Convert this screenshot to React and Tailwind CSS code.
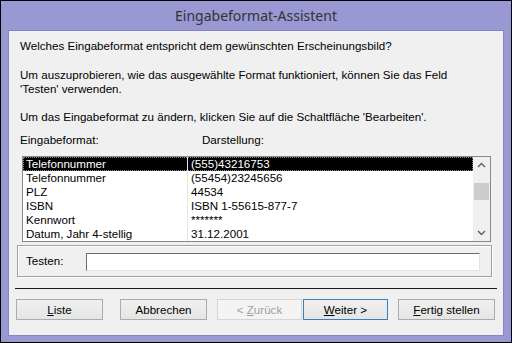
import React from "react";

const rows = [
  ["Telefonnummer", "(555)43216753"],
  ["Telefonnummer", "(55454)23245656"],
  ["PLZ", "44534"],
  ["ISBN", "ISBN 1-55615-877-7"],
  ["Kennwort", "*******"],
  ["Datum, Jahr 4-stellig", "31.12.2001"],
];

function Btn({ children, className = "", disabled, focused }) {
  return (
    <div
      className={
        "h-[21px] flex items-center justify-center border bg-gradient-to-b from-[#f0f0f0] to-[#e5e5e5] " +
        (focused ? "border-[#3c7fb1] " : disabled ? "border-[#d5d5d5] from-[#f4f4f4] to-[#f4f4f4] text-[#a0a0a0] " : "border-[#acacac] ") +
        className
      }
    >
      {children}
    </div>
  );
}

export default function App() {
  return (
    <div className="w-[512px] h-[343px] border border-black bg-[#9898d2] flex flex-col font-['Liberation_Sans',Arial,sans-serif] text-[11.6px] leading-[14px] text-black">
      <div className="h-[29px] flex items-center justify-center font-['Noto_Sans',sans-serif] text-[14px] text-[#333]">
        Eingabeformat-Assistent
      </div>
      <div className="mx-[7px] mb-[6px] flex-1 border border-[#8585c4] bg-[#f0f0f0] flex flex-col px-[7px]">
        <p className="pl-[4px] mt-[8px]">Welches Eingabeformat entspricht dem gewünschten Erscheinungsbild?</p>
        <p className="pl-[4px] mt-[15px]">
          Um auszuprobieren, wie das ausgewählte Format funktioniert, können Sie das Feld
          <br />
          'Testen' verwenden.
        </p>
        <p className="pl-[4px] mt-[14px]">Um das Eingabeformat zu ändern, klicken Sie auf die Schaltfläche 'Bearbeiten'.</p>
        <div className="pl-[4px] mt-[9px] flex">
          <span className="w-[182px]">Eingabeformat:</span>
          <span>Darstellung:</span>
        </div>
        <div className="ml-[6px] mt-[9px] w-[469px] h-[86px] border border-[#828790] bg-white flex overflow-hidden">
          <div className="flex-1 flex flex-col">
            {rows.map(([a, b], i) => (
              <div
                key={i}
                className={
                  "h-[14px] shrink-0 flex " +
                  (i === 0 ? "bg-black text-white outline outline-1 outline-dotted outline-[#888] -outline-offset-1" : "")
                }
              >
                <span className="w-[165px] pl-[3px] border-r border-[#e6e6e6]">{a}</span>
                <span className="pl-[3px]">{b}</span>
              </div>
            ))}
          </div>
          <div className="w-[17px] bg-[#f0f0f0] flex flex-col items-center">
            <svg width="17" height="17" viewBox="0 0 17 17" className="shrink-0">
              <path d="M5 10 L8.5 6.5 L12 10" fill="none" stroke="#606060" strokeWidth="1.4" />
            </svg>
            <div className="w-[15px] h-[17px] mt-[9px] bg-[#cdcdcd]" />
            <div className="flex-1" />
            <svg width="17" height="17" viewBox="0 0 17 17" className="shrink-0">
              <path d="M5 7 L8.5 10.5 L12 7" fill="none" stroke="#606060" strokeWidth="1.4" />
            </svg>
          </div>
        </div>
        <div className="ml-[1px] mt-[3px] w-[475px] h-[32px] border border-[#a0a0a0] shadow-[inset_1px_1px_0_#fff,1px_1px_0_#fff] flex items-center">
          <span className="ml-[8px] w-[60px]">Testen:</span>
          <div className="w-[394px] h-[18px] bg-white border-t border-l border-[#6d6d6d] border-r border-b border-r-[#e3e3e3] border-b-[#e3e3e3] mt-[1px]" />
        </div>
        <div className="-mx-[1px] mt-[11px] h-px bg-[#1a1a1a]" />
        <div className="mt-[10px] flex">
          <Btn className="w-[87px]">
            <span><u>L</u>iste</span>
          </Btn>
          <Btn className="ml-[17px] w-[87px]">Abbrechen</Btn>
          <Btn className="ml-[10px] w-[85px]" disabled>
            <span>&lt; <u>Z</u>urück</span>
          </Btn>
          <Btn className="ml-[1px] w-[85px]" focused>
            <span><u>W</u>eiter &gt;</span>
          </Btn>
          <Btn className="ml-[10px] w-[97px]">
            <span><u>F</u>ertig stellen</span>
          </Btn>
        </div>
      </div>
    </div>
  );
}
